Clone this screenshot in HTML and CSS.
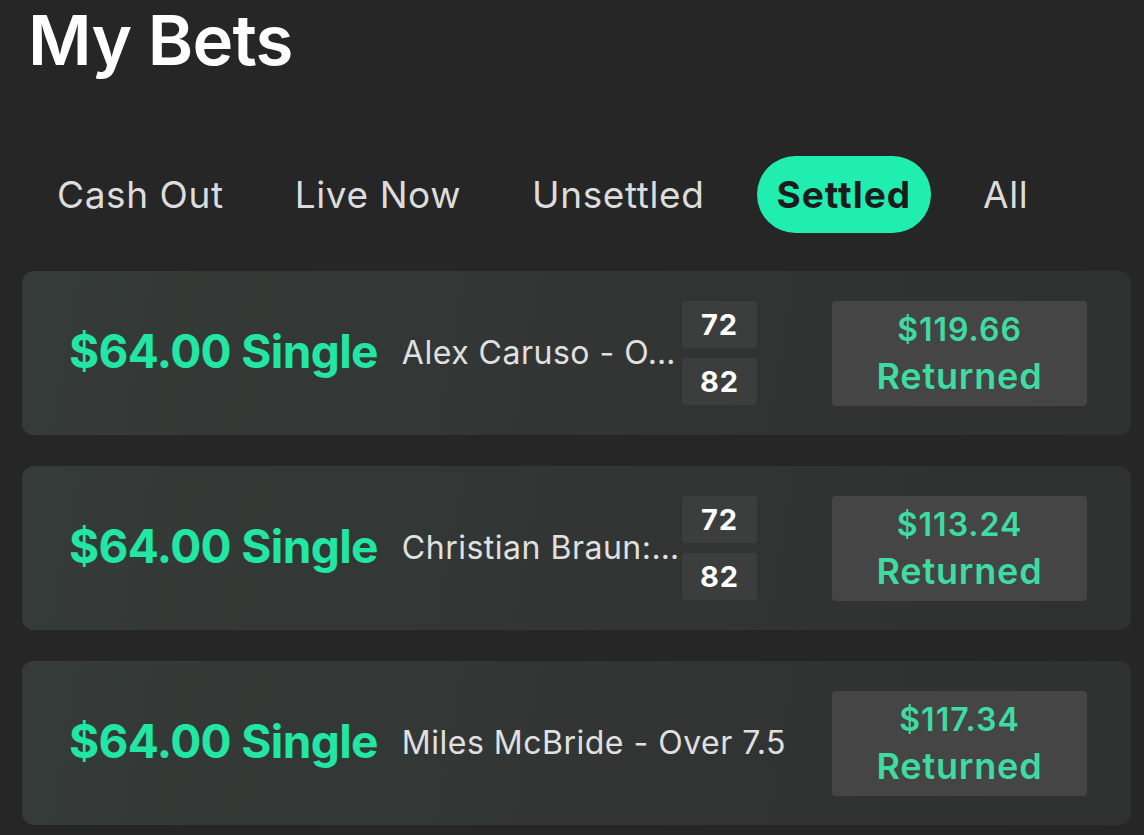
FILE: index.html
```html
<!DOCTYPE html>
<html lang="en">
<head>
    <meta charset="UTF-8">
    <meta name="viewport" content="width=device-width, initial-scale=1.0">
    <title>My Bets</title>
    <link rel="stylesheet" href="styles.css">
</head>
<body>
    <div class="page">
        <h1 class="title">My Bets</h1>

        <div class="tabs">
            <span class="tab">Cash Out</span>
            <span class="tab">Live Now</span>
            <span class="tab">Unsettled</span>
            <span class="tab active">Settled</span>
            <span class="tab">All</span>
        </div>

        <div class="bets">
            <div class="bet-card">
                <div class="stake">$64.00 Single</div>
                <div class="bet-main">
                    <div class="bet-name">Alex Caruso - O…</div>
                    <div class="scores">
                        <span class="score">72</span>
                        <span class="score">82</span>
                    </div>
                </div>
                <div class="returned">
                    <span>$119.66</span>
                    <span class="returned-label">Returned</span>
                </div>
            </div>

            <div class="bet-card">
                <div class="stake">$64.00 Single</div>
                <div class="bet-main">
                    <div class="bet-name">Christian Braun:…</div>
                    <div class="scores">
                        <span class="score">72</span>
                        <span class="score">82</span>
                    </div>
                </div>
                <div class="returned">
                    <span>$113.24</span>
                    <span class="returned-label">Returned</span>
                </div>
            </div>

            <div class="bet-card">
                <div class="stake">$64.00 Single</div>
                <div class="bet-main">
                    <div class="bet-name">Miles McBride - Over 7.5</div>
                </div>
                <div class="returned">
                    <span>$117.34</span>
                    <span class="returned-label">Returned</span>
                </div>
            </div>
        </div>
    </div>
</body>
</html>
```

FILE: styles.css
```css
body {
    margin: 0;
    background-color: #262626;
    color: #e2e2e2;
    font-family: "Inter", "Liberation Sans", sans-serif;
}
.page {
    padding: 0 13px 0 22px;
}
.title {
    margin: -3px 0 0;
    padding: 0 0 0 6px;
    font-size: 69px;
    line-height: 1.25;
    font-weight: 600;
    color: #fff;
    letter-spacing: -0.8px;
}
.tabs {
    display: flex;
    align-items: center;
    gap: 33px;
    margin-top: 73px;
    padding-left: 16px;
}
.tab {
    padding: 18px 19px;
    border-radius: 40px;
    font-size: 37px;
    line-height: 41px;
    letter-spacing: 0.6px;
    color: #dcdcdc;
}
.tab.active {
    padding: 18px 20px;
    background-color: #1feeb0;
    color: #1c1c1c;
    font-weight: 700;
    letter-spacing: 1px;
}
.bets {
    display: flex;
    flex-direction: column;
    gap: 31px;
    margin-top: 38px;
}
.bet-card {
    display: flex;
    align-items: center;
    height: 164px;
    padding: 0 44px 0 47px;
    border-radius: 12px;
    background: linear-gradient(100deg, #353b38 0%, #313433 60%, #2f3130 100%);
}
.stake {
    font-size: 46px;
    font-weight: 700;
    color: #22e6a3;
    white-space: nowrap;
    letter-spacing: -0.6px;
    margin-top: -4px;
}
.bet-main {
    flex: 1;
    min-width: 0;
    display: flex;
    align-items: center;
    margin-left: 24px;
}
.bet-name {
    min-width: 0;
    white-space: nowrap;
    font-size: 32px;
    line-height: 40px;
    letter-spacing: 0.5px;
    color: #e0e0e0;
}
.scores {
    display: flex;
    flex-direction: column;
    gap: 10px;
    margin: 0 75px 0 auto;
}
.score {
    width: 75px;
    height: 47px;
    display: flex;
    align-items: center;
    justify-content: center;
    border-radius: 3px;
    background-color: #3c3e3d;
    color: #fff;
    font-size: 29px;
    line-height: 1;
    font-weight: 700;
    letter-spacing: 1px;
}
.returned {
    width: 255px;
    height: 105px;
    display: flex;
    flex-direction: column;
    align-items: center;
    justify-content: center;
    border-radius: 4px;
    background-color: #454545;
    color: #3fdca2;
    font-size: 32px;
    font-weight: 600;
    line-height: 46px;
    letter-spacing: 1px;
}
.returned-label {
    font-size: 36px;
    letter-spacing: 0.8px;
}
```
